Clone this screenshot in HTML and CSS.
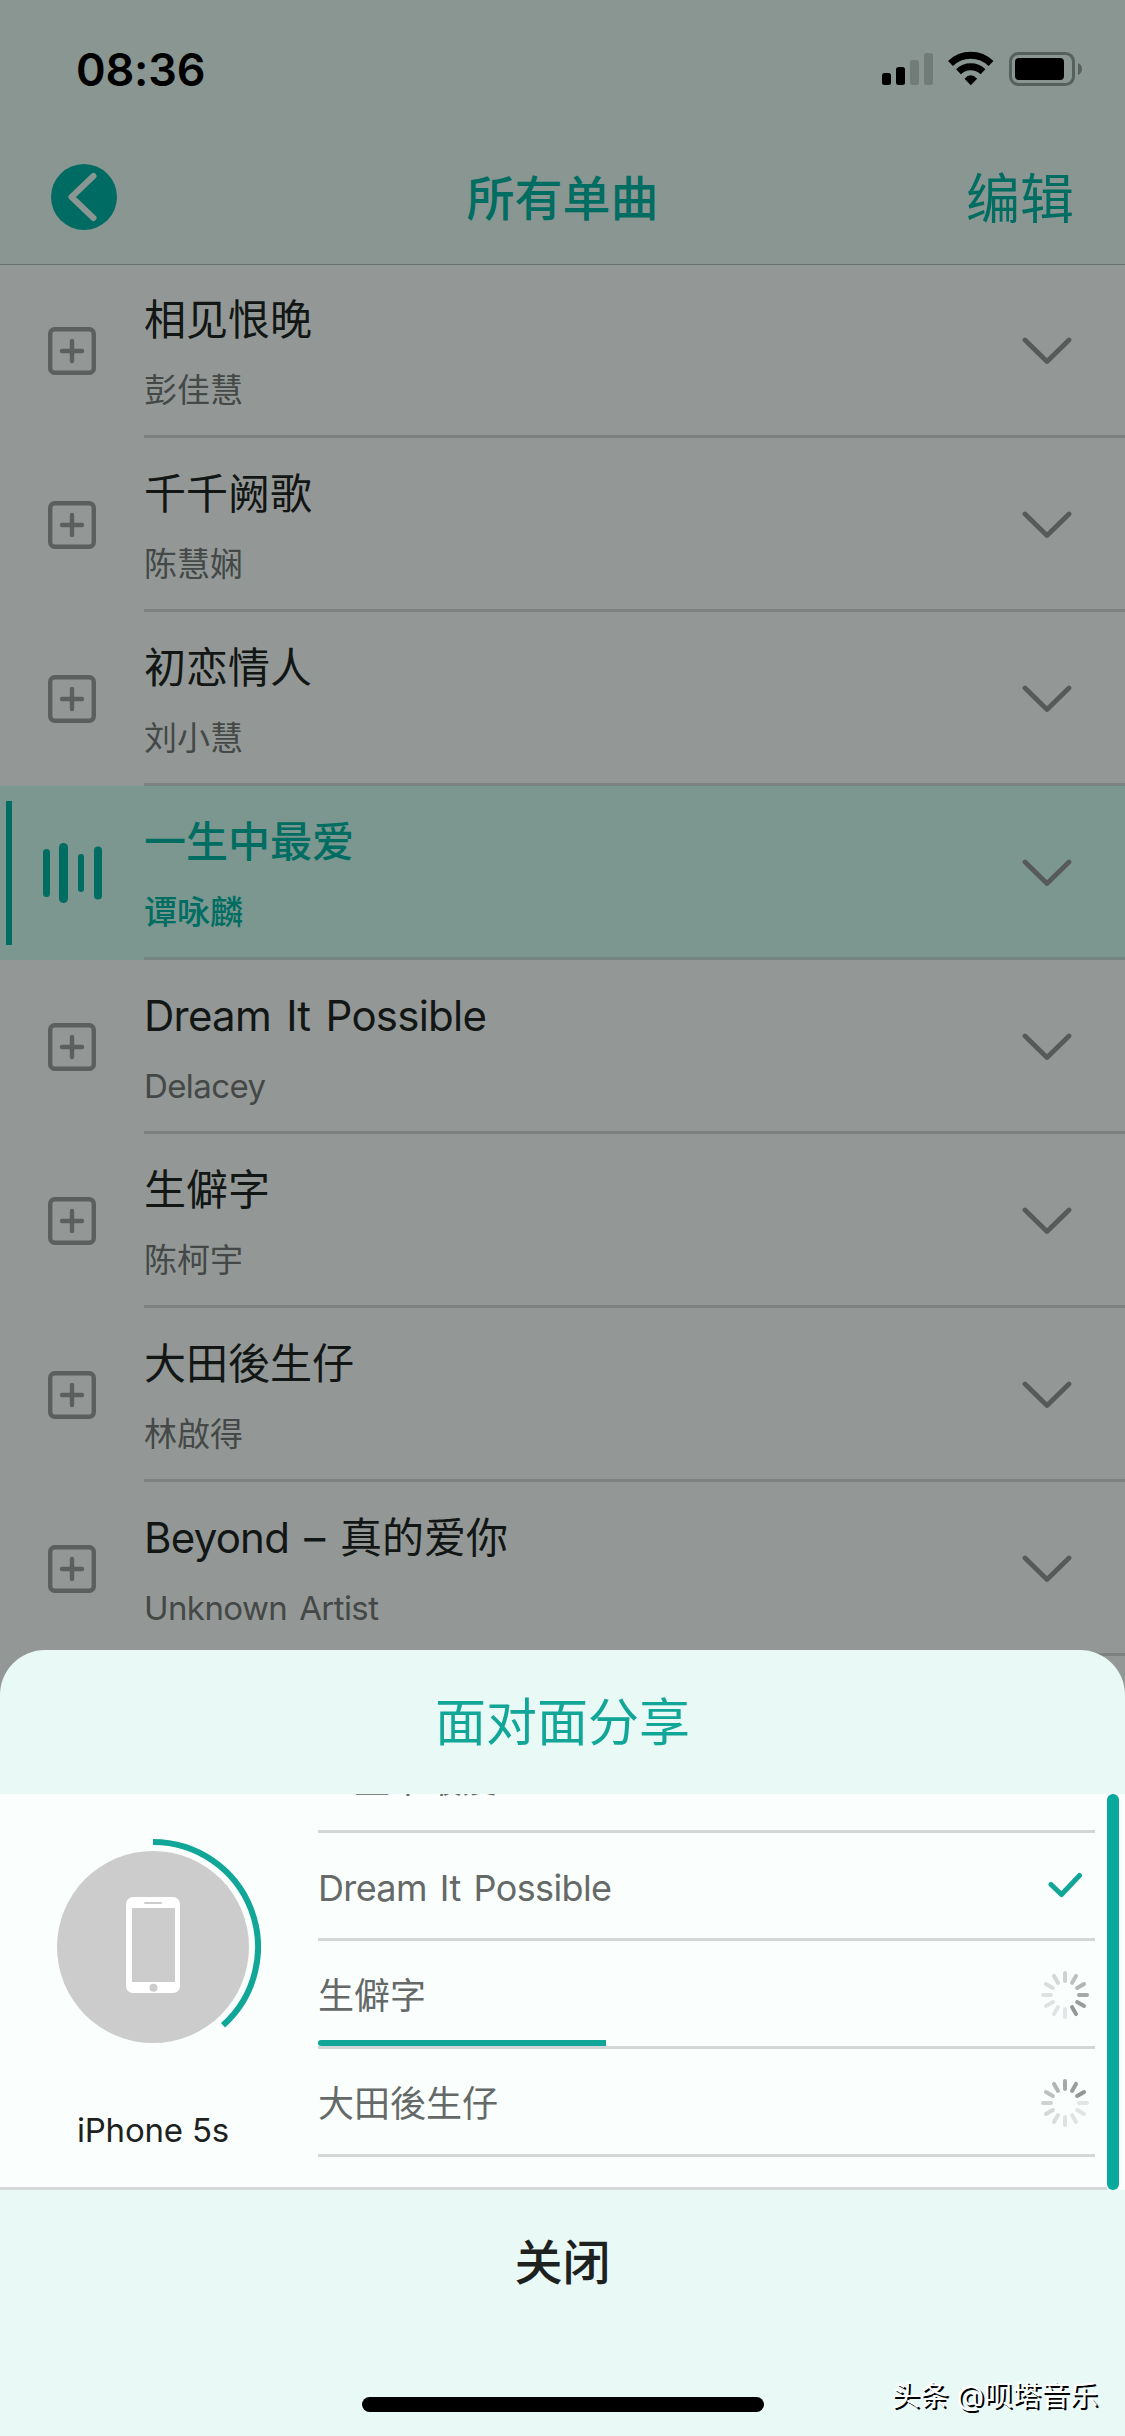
FILE: index.html
```html
<!DOCTYPE html>
<html lang="zh-CN">
<head>
<meta charset="utf-8">
<title>所有单曲</title>
<link rel="stylesheet" href="styles.css">
</head>
<body>
<svg class="defs" width="0" height="0">
  <symbol id="add" viewBox="0 0 48 48"><rect x="2.200" y="2.200" width="43.600" height="43.600" rx="4.500"/><path d="M24 14v20M14 24h20"/></symbol>
  <symbol id="chevron" viewBox="0 0 50 28"><path d="M3 3l22 21.500L47 3"/></symbol>
</svg>
<div class="screen">
  <header class="top">
    <div class="status">
      <span class="time">08:36</span>
      <svg class="status-icons" width="202" height="36" viewBox="881 51 202 36">
        <rect x="882" y="73" width="9" height="12" rx="2.500"/>
        <rect x="896" y="67" width="9" height="18" rx="2.500"/>
        <rect class="faint" x="910" y="60" width="9" height="25" rx="2.500"/>
        <rect class="faint" x="924" y="53" width="9" height="32" rx="2.500"/>
        <g class="wifi"><path d="M950.500 63.500a29 29 0 0 1 40.500 0"/><path d="M958.500 71.700a17.800 17.800 0 0 1 24.500 0"/></g>
        <path d="M970.800 85.300l-6.300-6.600q6.300-6.800 12.600 0z"/>
        <rect class="shell" x="1010.500" y="53.500" width="63" height="31" rx="8"/>
        <rect x="1015" y="58" width="49" height="22" rx="4"/>
        <path class="cap" d="M1078 63q4 2 4 6t-4 6z"/>
      </svg>
    </div>
    <nav class="nav">
      <svg class="back" width="66" height="66" viewBox="0 0 66 66"><circle cx="33" cy="33" r="33"/><path d="M42.500 12L20.500 33l22 21"/></svg>
      <h1>所有单曲</h1>
      <span class="edit">编辑</span>
    </nav>
  </header>
  <main class="songs">
    <div class="song"><svg class="add"><use href="#add"/></svg><div class="info"><p class="name">相见恨晚</p><p class="artist">彭佳慧</p></div><svg class="chev"><use href="#chevron"/></svg></div>
    <div class="song"><svg class="add"><use href="#add"/></svg><div class="info"><p class="name">千千阙歌</p><p class="artist">陈慧娴</p></div><svg class="chev"><use href="#chevron"/></svg></div>
    <div class="song"><svg class="add"><use href="#add"/></svg><div class="info"><p class="name">初恋情人</p><p class="artist">刘小慧</p></div><svg class="chev"><use href="#chevron"/></svg></div>
    <div class="song playing"><i class="mark"></i><svg class="wave" width="60" height="60" viewBox="0 0 60 60"><rect x="0" y="6" width="7" height="48" rx="3.500"/><rect x="16" y="0" width="9" height="60" rx="4.500"/><rect x="35" y="11" width="6" height="38" rx="3"/><rect x="51" y="3.500" width="8" height="53" rx="4"/></svg><div class="info"><p class="name">一生中最爱</p><p class="artist">谭咏麟</p></div><svg class="chev"><use href="#chevron"/></svg></div>
    <div class="song"><svg class="add"><use href="#add"/></svg><div class="info"><p class="name latin">Dream It Possible</p><p class="artist latin">Delacey</p></div><svg class="chev"><use href="#chevron"/></svg></div>
    <div class="song"><svg class="add"><use href="#add"/></svg><div class="info"><p class="name">生僻字</p><p class="artist">陈柯宇</p></div><svg class="chev"><use href="#chevron"/></svg></div>
    <div class="song"><svg class="add"><use href="#add"/></svg><div class="info"><p class="name">大田後生仔</p><p class="artist">林啟得</p></div><svg class="chev"><use href="#chevron"/></svg></div>
    <div class="song"><svg class="add"><use href="#add"/></svg><div class="info"><p class="name"><span class="latin">Beyond – </span>真的爱你</p><p class="artist latin">Unknown Artist</p></div><svg class="chev"><use href="#chevron"/></svg></div>
  </main>
  <section class="sheet">
    <h2>面对面分享</h2>
    <div class="share">
      <div class="device">
        <svg width="216" height="216" viewBox="-108 -108 216 216">
          <circle r="96" fill="#ccc"/>
          <path d="M0-105A105 105 0 0 1 70 78.300" fill="none" stroke="#12a698" stroke-width="6"/>
          <rect x="-27" y="-50" width="54" height="96" rx="7" fill="#fff"/>
          <rect x="-21" y="-39" width="43" height="74" fill="#ccc"/>
          <rect x="-9" y="-45" width="18" height="2" rx="1" fill="#ccc"/>
          <circle cx="0.500" cy="40.700" r="4" fill="#ccc"/>
        </svg>
        <p class="model">iPhone 5s</p>
      </div>
      <div class="queue">
        <div class="item"><span>一生中最爱</span></div>
        <div class="item"><span class="latin">Dream It Possible</span><svg class="check" width="34" height="26" viewBox="0 0 34 26"><path d="M3 12.500L13.500 22.500 31.500 3.500"/></svg></div>
        <div class="item"><span>生僻字</span>
          <svg class="spin" width="48" height="48" viewBox="-24 -24 48 48"><g id="spokes"><path stroke="#d0d2d2" d="M0-22V-14"/><path stroke="#bfc1c1" d="M0-22V-14" transform="rotate(30)"/><path stroke="#b3b5b5" d="M0-22V-14" transform="rotate(60)"/><path stroke="#a7a9a9" d="M0-22V-14" transform="rotate(90)"/><path stroke="#9b9d9d" d="M0-22V-14" transform="rotate(120)"/><path stroke="#959797" d="M0-22V-14" transform="rotate(150)"/><path stroke="#e3e6e6" d="M0-22V-14" transform="rotate(180)"/><path stroke="#e1e4e4" d="M0-22V-14" transform="rotate(210)"/><path stroke="#e0e3e3" d="M0-22V-14" transform="rotate(240)"/><path stroke="#dfe2e2" d="M0-22V-14" transform="rotate(270)"/><path stroke="#dadddd" d="M0-22V-14" transform="rotate(300)"/><path stroke="#d5d8d8" d="M0-22V-14" transform="rotate(330)"/></g></svg>
          <i class="progress" style="width:288px"></i></div>
        <div class="item"><span>大田後生仔</span><svg class="spin" width="48" height="48" viewBox="-24 -24 48 48"><use href="#spokes" transform="rotate(-90)"/></svg></div>
        <div class="item rest"></div>
      </div>
      <div class="track"><i class="thumb"></i></div>
    </div>
    <div class="close">关闭</div>
    <footer class="bottom"><i class="home"></i><span class="credit">头条 @呗塔音乐</span></footer>
  </section>
</div>
</body>
</html>
```
FILE: styles.css
```css
* { box-sizing: border-box; margin: 0; padding: 0; }
body { font-family: Inter, "Noto Sans CJK SC", sans-serif; background: #939896; }
.defs { display: block; height: 0; }
.screen { width: 1125px; height: 2436px; overflow: hidden; background: #939896; display: flex; flex-direction: column; }
.latin { font-weight: 400; letter-spacing: -0.018em; word-spacing: 0.1em; }

.top { position: relative; flex: none; height: 264px; background: #8a9691; box-shadow: 0 1px 0 #66716c; }
.status { height: 140px; padding: 51px 42px 0 76px; display: flex; justify-content: space-between; align-items: flex-start; }
.time { font-size: 45px; line-height: 37px; font-weight: 600; letter-spacing: -0.2px; color: #000; }
.status-icons .faint { fill: #717c78; }
.status-icons .wifi path { fill: none; stroke: #000; stroke-width: 7; }
.status-icons .shell { fill: none; stroke: #56605c; stroke-width: 3; }
.status-icons .cap { fill: #56605c; }
.nav { height: 114px; padding: 0 51px; display: grid; grid-template-columns: 1fr auto 1fr; align-items: center; color: #006d62; }
.back circle { fill: #006b62; }
.back path { fill: none; stroke: #8a9691; stroke-width: 6; stroke-linecap: round; stroke-linejoin: round; }
.nav h1 { padding-top: 4px; font-size: 48px; line-height: 66px; font-weight: 500; }
.edit { justify-self: end; padding-top: 6px; font-size: 54px; line-height: 66px; }

.songs { flex: none; height: 1386px; }
.song { height: 174px; display: grid; grid-template-columns: 144px 1fr; align-items: stretch; position: relative; }
.add { width: 48px; height: 48px; margin-left: 48px; align-self: center; fill: none; stroke: #5b5f5e; stroke-width: 4.4; stroke-linecap: round; }
.info { padding-top: 26px; border-bottom: 3px solid #7d8180; }
.name { font-size: 42px; line-height: 60px; color: #121615; }
.artist { font-size: 33px; line-height: 42px; margin-top: 19px; color: #444847; }
.chev { position: absolute; right: 53px; top: 73px; width: 50px; height: 28px; fill: none; stroke: #565b59; stroke-width: 4.8; stroke-linecap: round; stroke-linejoin: round; }
.playing { background: #7b978f; }
.playing .name, .playing .artist { color: #006d62; font-weight: 500; }
.playing .info { border-color: #738581; }
.mark { position: absolute; left: 6px; top: 15px; width: 6px; height: 144px; background: #006d62; }
.wave { margin-left: 43px; align-self: center; fill: #006d62; }

.sheet { position: relative; flex: none; height: 786px; background: #e9f9f6; border-radius: 45px 45px 0 0; }
.sheet h2 { height: 144px; padding-top: 1px; font-size: 51px; line-height: 144px; font-weight: 400; text-align: center; color: #12a698; }
.share { height: 396px; display: grid; grid-template-columns: 318px 777px 30px; background: linear-gradient(#d2d9d8, #d2d9d8) 0 100% / 1107px 3px no-repeat, #fafffe; overflow: hidden; }
.device { padding: 45px 0 0 45px; width: 261px; }
.device svg { display: block; }
.model { margin-top: 54px; font-size: 33px; line-height: 42px; text-align: center; letter-spacing: -0.2px; color: #1d2221; }
.queue { height: 393px; overflow: hidden; display: flex; flex-direction: column; justify-content: flex-end; }
.item { position: relative; flex: none; height: 108px; border-bottom: 3px solid #d3d7d7; display: flex; align-items: center; justify-content: space-between; padding: 2px 6px 0 0; font-size: 36px; line-height: 48px; color: #656968; }
.item span { padding-top: 2px; }
.item.rest { height: 30px; border: 0; }
.check { margin-right: 7px; margin-top: -3px; fill: none; stroke: #12a698; stroke-width: 5; stroke-linecap: round; stroke-linejoin: round; }
.spin { fill: none; stroke-width: 4; stroke-linecap: round; }
.progress { position: absolute; left: 0; bottom: 0; height: 6px; border-radius: 3px 0 0 3px; background: #12a698; }
.track { padding-left: 12px; }
.thumb { display: block; width: 12px; height: 396px; border-radius: 6px; background: #06a99c; }
.close { height: 144px; font-size: 48px; line-height: 145px; font-weight: 500; text-align: center; color: #1d2221; }
.bottom { height: 102px; display: grid; grid-template-columns: 362px 402px 1fr; align-items: start; padding: 52px 27px 0 0; }
.home { grid-column: 2; margin-top: 11px; height: 15px; border-radius: 8px; background: #000; }
.credit { justify-self: end; font-size: 28.5px; line-height: 40px; margin-top: -10px; color: #fff; text-shadow: 2px 2px 0 #000; white-space: nowrap; }
```
